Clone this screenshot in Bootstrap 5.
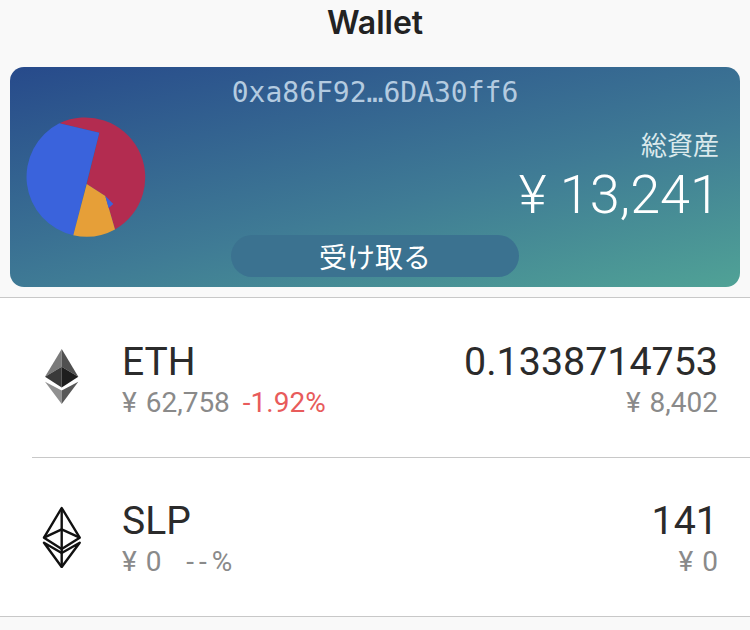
<!DOCTYPE html>
<html lang="ja">
<head>
    <meta charset="UTF-8">
    <meta name="viewport" content="width=device-width, initial-scale=1.0">
    <link href="https://cdn.jsdelivr.net/npm/bootstrap@5.3.3/dist/css/bootstrap.min.css" rel="stylesheet">
    <script src="https://cdn.jsdelivr.net/npm/bootstrap@5.3.3/dist/js/bootstrap.bundle.min.js"></script>
    <title>Wallet</title>
    <style>
        body {
            background-color: #f9f9f9;
            font-family: Roboto, "Noto Sans CJK JP", sans-serif;
            color: #2b2b2b;
            height: 630px;
            overflow: hidden;
        }

        .top-title {
            height: 46px;
            font-family: Inter, sans-serif;
            font-size: 32px;
            font-weight: 600;
            color: #222;
            line-height: 46px;
        }

        .wallet-card {
            height: 220px;
            margin: 21px 10px 10px;
            border-radius: 14px;
            background: linear-gradient(167deg, #274a8b 0%, #3f7b95 58%, #50a296 100%);
            color: #fff;
        }

        .wallet-addr {
            font-family: "DejaVu Sans Mono", monospace;
            font-size: 28px;
            line-height: 32px;
            padding-top: 10px;
            color: #b4cbe0;
        }

        .wallet-mid {
            min-height: 0;
        }

        .wallet-pie {
            width: 120px;
            height: 120px;
            margin-left: 16px;
            margin-top: 8px;
        }

        .total-label {
            font-size: 26px;
            line-height: 30px;
            margin-top: 6px;
            color: #dbe9ec;
            padding-right: 21px;
        }

        .total-value {
            font-size: 54px;
            line-height: 60px;
            font-weight: 300;
            padding-right: 20px;
            margin-top: 4px;
        }

        .receive-wrap {
            padding-bottom: 10px;
        }

        .receive-btn {
            width: 288px;
            height: 42px;
            border-radius: 21px;
            background-color: #3b7290;
            color: #fff;
            font-size: 28px;
            line-height: 36px;
            padding: 6px 0 0;
            border: 0;
        }

        .coin-list {
            background-color: #fff;
            border-top: 1px solid #c8c8c8;
            border-bottom: 1px solid #c8c8c8;
        }

        .coin-row {
            height: 159px;
            padding: 3px 32px 0 32px;
        }

        .coin-row + .coin-row {
            border-top: 1px solid #c8c8c8;
            margin-left: 32px;
            padding-left: 0;
        }

        .coin-icon {
            width: 60px;
            margin-right: 30px;
            margin-top: -5px;
        }

        .coin-name {
            font-size: 39px;
            line-height: 42px;
        }

        .coin-amount {
            font-size: 39.4px;
            line-height: 42px;
        }

        .coin-sub {
            font-size: 28px;
            line-height: 30px;
            margin-top: 5px;
            word-spacing: 2px;
            color: #8a8a8a;
        }

        .coin-change {
            color: #e85b5b;
        }

        .coin-empty {
            letter-spacing: 5px;
        }
    </style>
</head>

<body>
    <div class="top-title text-center">Wallet</div>

    <div class="wallet-card d-flex flex-column">
        <div class="wallet-addr text-center">0xa86F92…6DA30ff6</div>
        <div class="wallet-mid d-flex justify-content-between flex-grow-1">
            <svg class="wallet-pie" viewBox="0 0 120 120">
                <path d="M33.3 6.3A60 60 0 0 1 89 112.5L79.3 79 60.7 67 73.3 15.7Z" fill="#b32c50"/>
                <path d="M33.3 6.3 73.3 15.7 47.3 118.3A60 60 0 0 1 33.3 6.3Z" fill="#3a63dc"/>
                <path d="M60.7 67 47.3 118.3A60 60 0 0 0 89 112.5L79.3 79Z" fill="#e69f38"/>
                <path d="M79.3 79 87.3 87 82.7 91Z" fill="#3a63dc"/>
            </svg>
            <div class="text-end pt-3">
                <div class="total-label">総資産</div>
                <div class="total-value">¥ 13,241</div>
            </div>
        </div>
        <div class="receive-wrap">
            <button class="btn receive-btn d-block mx-auto" type="button">受け取る</button>
        </div>
    </div>

    <div class="coin-list">
        <div class="coin-row d-flex align-items-center">
            <div class="coin-icon text-center">
                <svg width="36" height="57" viewBox="0 0 36 57">
                    <path d="M17.7 1 1 28.7 17.7 18.7Z" fill="#7a7a7a"/>
                    <path d="M17.7 1 34.3 28.7 17.7 18.7Z" fill="#505050"/>
                    <path d="M1 28.7 17.7 18.7V39.5Z" fill="#3a3a3a"/>
                    <path d="M34.3 28.7 17.7 18.7V39.5Z" fill="#1e1e1e"/>
                    <path d="M1 33.7 17.7 42.5V56Z" fill="#909090"/>
                    <path d="M34.3 33.7 17.7 42.5V56Z" fill="#585858"/>
                </svg>
            </div>
            <div class="flex-grow-1">
                <div class="coin-name">ETH</div>
                <div class="coin-sub">¥ 62,758 <span class="coin-change ms-1">-1.92%</span></div>
            </div>
            <div class="text-end">
                <div class="coin-amount">0.1338714753</div>
                <div class="coin-sub">¥ 8,402</div>
            </div>
        </div>
        <div class="coin-row d-flex align-items-center">
            <div class="coin-icon text-center">
                <svg width="40" height="64" viewBox="0 -2 40 64" fill="none" stroke="#111" stroke-width="2.4" stroke-linejoin="round">
                    <path d="M19.7 2 2 31.7 19.7 43 37.7 31.7Z"/>
                    <path d="M2 31.7 19.7 23.3 37.7 31.7"/>
                    <path d="M19.7 2V61"/>
                    <path d="M2 36.7 19.7 47 37.7 36.7 19.7 61Z"/>
                </svg>
            </div>
            <div class="flex-grow-1">
                <div class="coin-name">SLP</div>
                <div class="coin-sub">¥ 0 <span class="coin-empty ms-3">--%</span></div>
            </div>
            <div class="text-end">
                <div class="coin-amount">141</div>
                <div class="coin-sub">¥ 0</div>
            </div>
        </div>
    </div>
</body>
</html>
